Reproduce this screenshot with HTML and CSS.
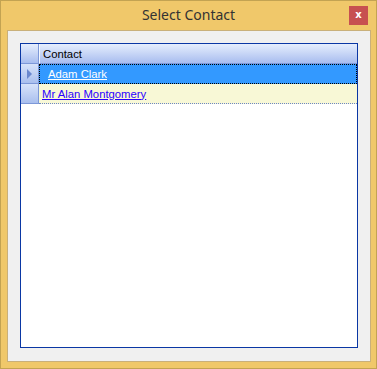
FILE: index.html
```html
<!DOCTYPE html>
<html lang="en">
<head>
  <meta charset="UTF-8">
  <title>Select Contact</title>
  <link rel="stylesheet" href="styles.css">
</head>
<body>

  <div class="window">
    <div class="titlebar">
      <span class="title">Select Contact</span>
      <span class="close-btn">x</span>
    </div>

    <div class="client">
      <div class="grid">
        <div class="grid-row header-row">
          <div class="row-head"></div>
          <div class="cell col-head">Contact</div>
        </div>
        <div class="grid-row selected">
          <div class="row-head"><span class="arrow"></span></div>
          <div class="cell"><a class="link" href="#">Adam Clark</a></div>
        </div>
        <div class="grid-row alt">
          <div class="row-head"></div>
          <div class="cell"><a class="link" href="#">Mr Alan Montgomery</a></div>
        </div>
      </div>
    </div>
  </div>

</body>
</html>
```

FILE: styles.css
```css
html, body {
  margin: 0;
  padding: 0;
}
body {
  font-family: "Liberation Sans", Arial, sans-serif;
  font-size: 11.3px;
  background: #f0c86a;
}
.window {
  width: 377px;
  height: 369px;
  box-sizing: border-box;
  border: 1px solid #c3a352;
  background: #f0c86a;
  display: flex;
  flex-direction: column;
}
.titlebar {
  height: 29px;
  position: relative;
  display: flex;
  align-items: center;
  justify-content: center;
}
.title {
  font-family: "Noto Sans", "Open Sans", sans-serif;
  font-size: 14px;
  color: #333;
  margin-top: -2px;
}
.close-btn {
  position: absolute;
  right: 8px;
  top: 5px;
  width: 19px;
  height: 19px;
  background: #c75050;
  color: #fff;
  font-family: "DejaVu Sans", sans-serif;
  font-weight: bold;
  font-size: 10px;
  line-height: 17px;
  text-align: center;
}
.client {
  flex: 1;
  margin: 0 5px 6px 6px;
  border: 1px solid #c9b07a;
  background: #f0f0f0;
  padding: 12px 12px 13px 12px;
  display: flex;
}
.grid {
  flex: 1;
  border: 1px solid #0a37a4;
  background: #fff;
}
.grid-row {
  display: flex;
  height: 20px;
}
.row-head {
  width: 18px;
  box-sizing: border-box;
  border-right: 1px solid #7d98d8;
  border-bottom: 1px solid #7d98d8;
  background: linear-gradient(#d8e3fa, #a9bfee);
  display: flex;
  align-items: center;
  justify-content: center;
}
.header-row .row-head {
  background: linear-gradient(#e6eefd, #a8bdef);
}
.arrow {
  width: 0;
  height: 0;
  border-top: 5px solid transparent;
  border-bottom: 5px solid transparent;
  border-left: 5px solid #6a88cf;
  margin-left: -1px;
}
.cell {
  flex: 1;
  box-sizing: border-box;
  display: flex;
  align-items: center;
  padding-left: 3px;
  white-space: nowrap;
}
.col-head {
  background: linear-gradient(#e6eefd, #a8bdef);
  border-left: 1px solid #f4f8ff;
  border-bottom: 1px solid #7d98d8;
  color: #000;
  padding-left: 3px;
}
.selected .cell {
  background: #3399ff;
  border: 1px dotted #000;
  padding-left: 8px;
}
.selected .link {
  color: #fff;
}
.alt .cell {
  background: #f8f8d6;
  border-bottom: 1px dotted #6c86c4;
  padding-left: 3px;
}
.link {
  color: #2a00ff;
  text-decoration: underline;
}
```
